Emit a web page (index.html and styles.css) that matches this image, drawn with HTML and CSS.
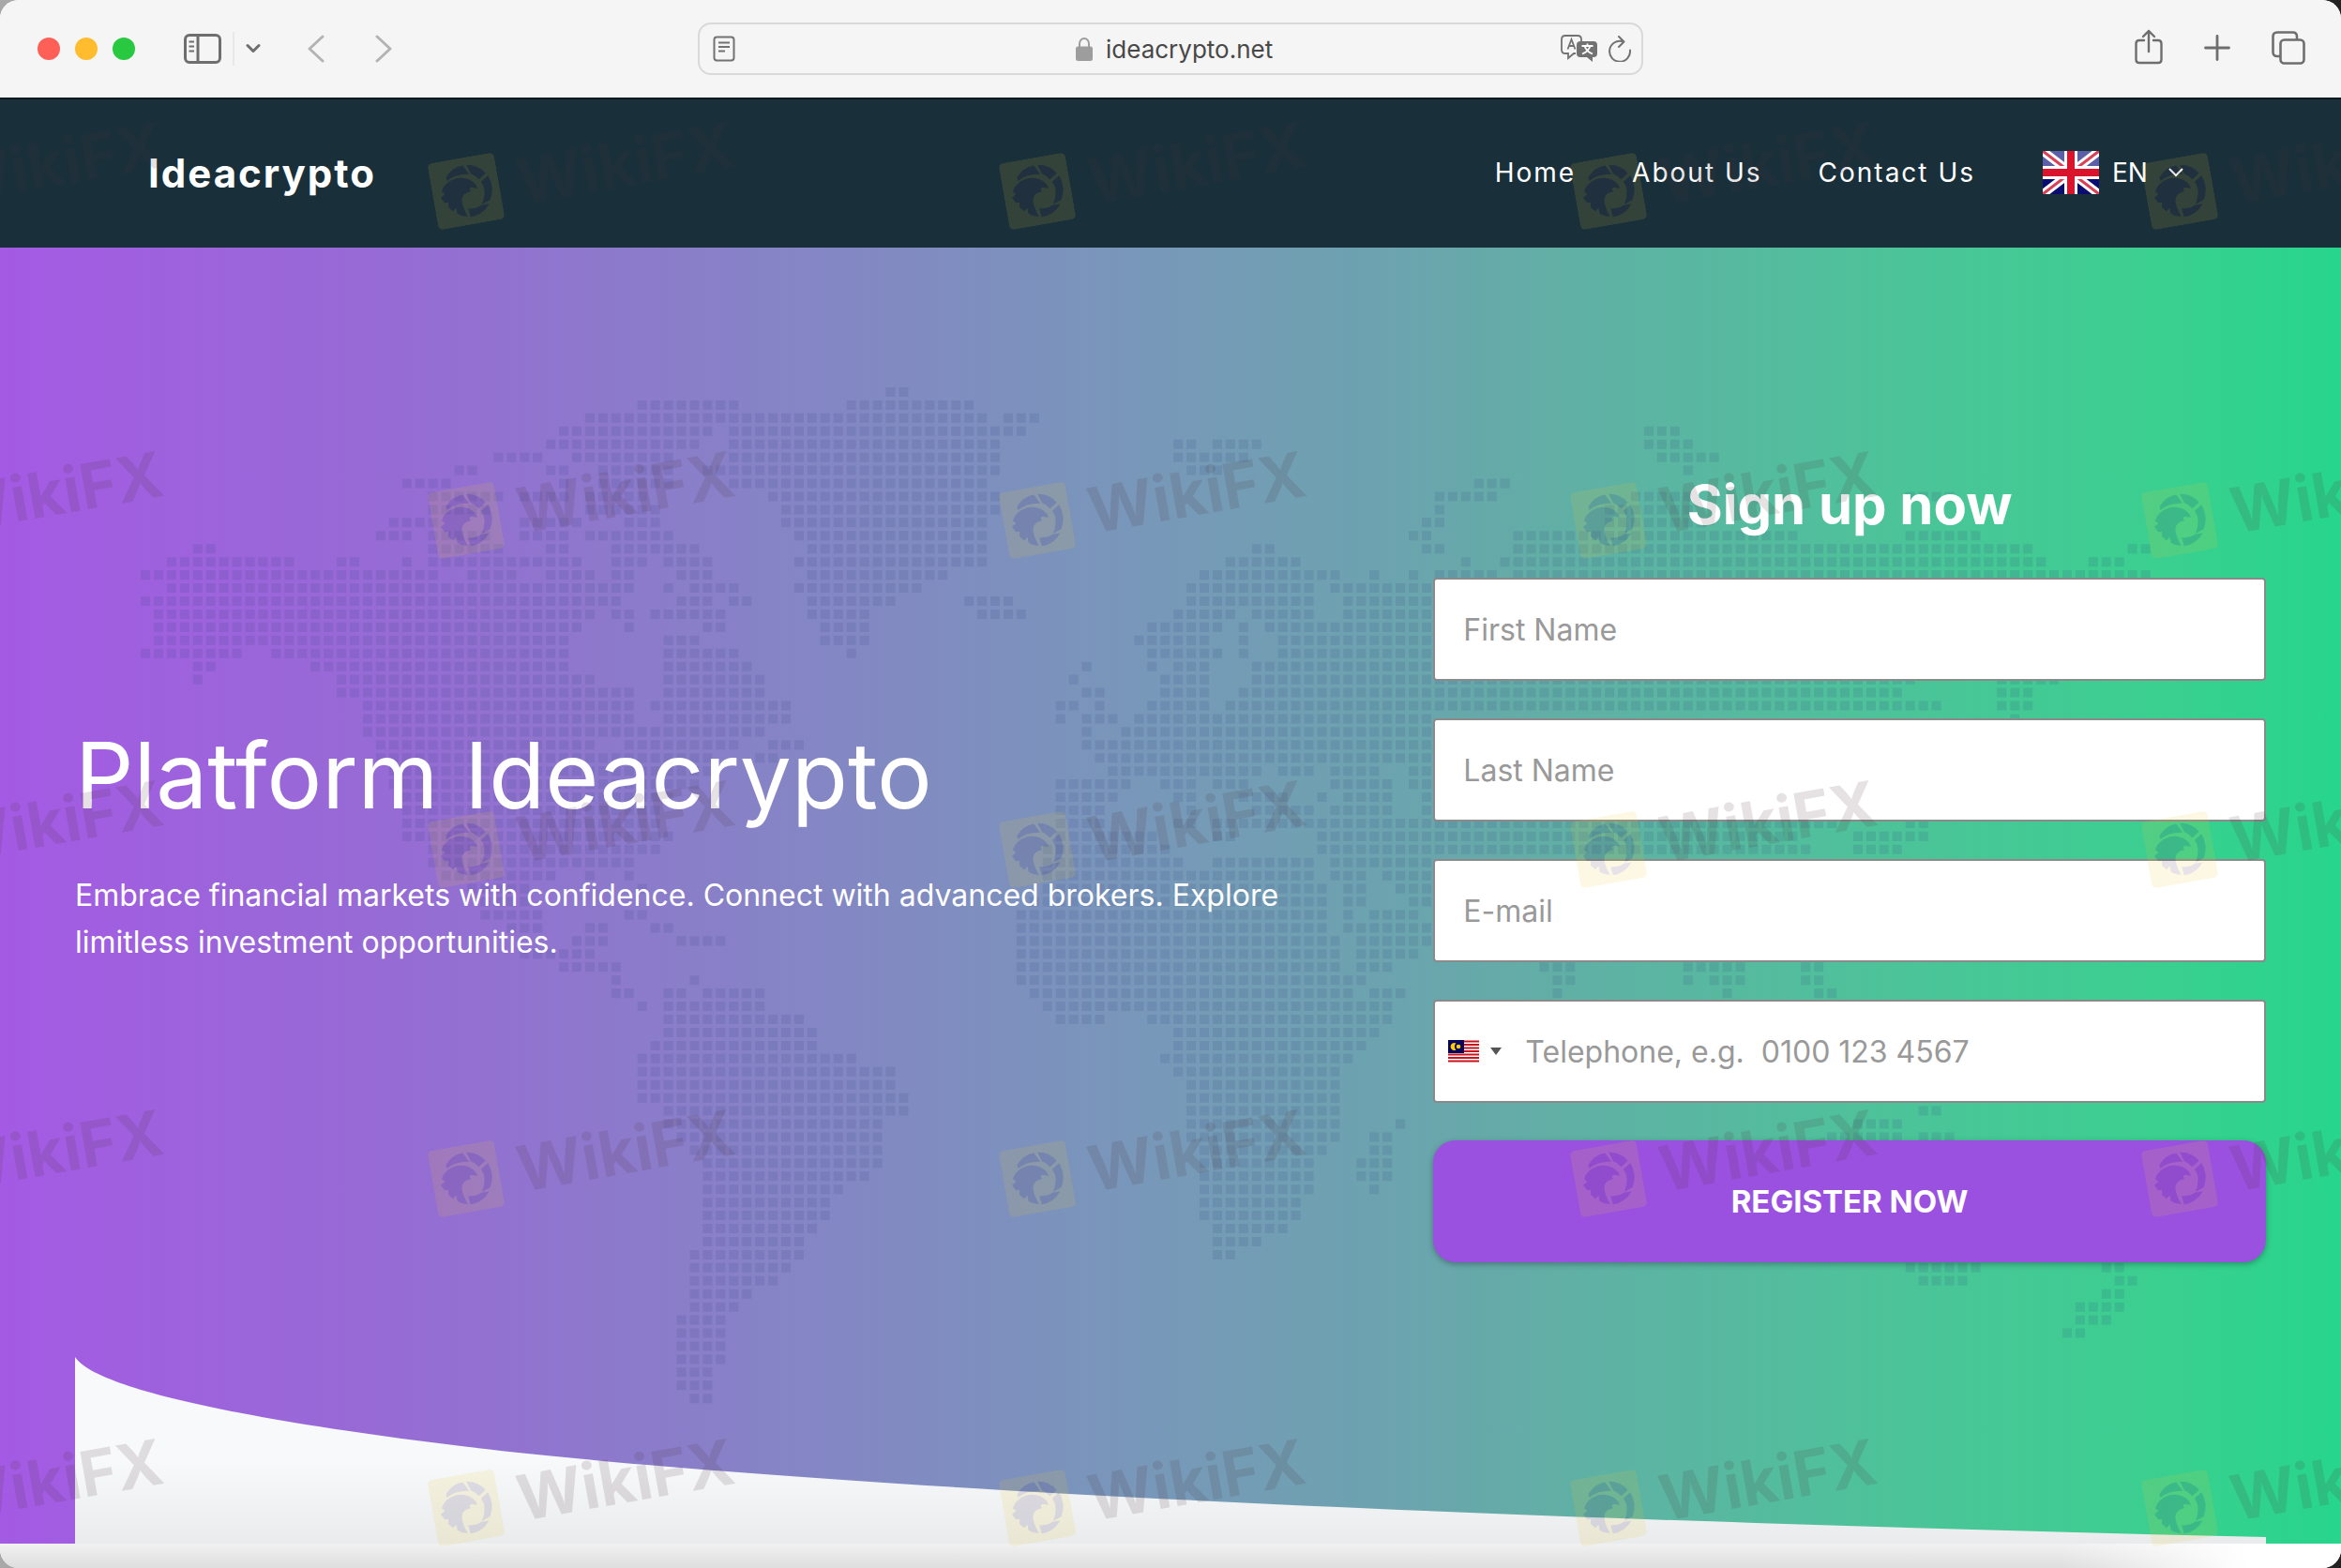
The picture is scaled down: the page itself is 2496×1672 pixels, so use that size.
FILE: index.html
```html
<!DOCTYPE html>
<html lang="en">
<head>
    <meta charset="UTF-8">
    <meta name="viewport" content="width=device-width, initial-scale=1.0">
    <title>Ideacrypto</title>
    <link rel="stylesheet" href="styles.css">
</head>
<body>

<div class="window">

    <!-- browser bar -->
    <div class="toolbar">
        <div class="tools-left">
            <span class="light red"></span>
            <span class="light yellow"></span>
            <span class="light green"></span>
            <button class="tool sidebar" aria-label="Sidebar">
                <svg width="40" height="32" viewBox="0 0 40 32" fill="none" stroke="#6e6e6e" stroke-width="3">
                    <rect x="1.5" y="1.5" width="37" height="29" rx="4.5"/>
                    <path d="M15 2v28"/>
                    <path d="M5.500 8.500h5.500M5.500 13.500h5.500M5.500 18.500h5.500" stroke-width="2"/>
                </svg>
            </button>
            <button class="tool group-menu" aria-label="Tab groups">
                <svg width="16" height="12" viewBox="0 0 16 12" fill="none" stroke="#6e6e6e" stroke-width="3" stroke-linecap="round" stroke-linejoin="round"><path d="M2 2.500l6 6 6-6"/></svg>
            </button>
            <button class="tool back" aria-label="Back">
                <svg width="18" height="30" viewBox="0 0 18 30" fill="none" stroke="#b3b3b3" stroke-width="3" stroke-linecap="round" stroke-linejoin="round"><path d="M16 2L2 15l14 13"/></svg>
            </button>
            <button class="tool forward" aria-label="Forward">
                <svg width="18" height="30" viewBox="0 0 18 30" fill="none" stroke="#b3b3b3" stroke-width="3" stroke-linecap="round" stroke-linejoin="round"><path d="M2 2l14 13L2 28"/></svg>
            </button>
        </div>

        <div class="address">
            <button class="tool" aria-label="Reader">
                <svg width="24" height="28" viewBox="0 0 24 28" fill="none" stroke="#727272" stroke-width="2">
                    <rect x="1.500" y="1.500" width="21" height="25" rx="3"/>
                    <path d="M6 7.500h12M6 12h12M6 16.500h7"/>
                </svg>
            </button>
            <div class="site">
                <svg width="18" height="26" viewBox="0 0 18 26"><path d="M4 11V7.500a5 5.500 0 0 1 10 0V11" fill="none" stroke="#9d9d9d" stroke-width="2"/><rect y="10.500" width="18" height="15.500" rx="2.500" fill="#9d9d9d"/></svg>
                <input type="text" value="ideacrypto.net" aria-label="Address">
            </div>
            <button class="tool" aria-label="Translate">
                <svg width="40" height="30" viewBox="0 0 40 30">
                    <path d="M16 20h-2l-6 5v-5H5q-4 0-4-4V5q0-4 4-4h13q4 0 4 4v2" fill="none" stroke="#727272" stroke-width="1.800"/>
                    <path d="M7.500 15.500L11.500 5l4 10.500M9 12h5" fill="none" stroke="#727272" stroke-width="1.800"/>
                    <path d="M21 7h14q4 0 4 4v9q0 4-4 4h-1v5l-6-5h-7q-4 0-4-4v-9q0-4 4-4z" fill="#727272"/>
                    <path d="M22.500 12h12M28.500 9.500V12M31.500 12q-2 6-8.500 8.500M25.500 12q2 6 8.500 8.500" fill="none" stroke="#fff" stroke-width="1.800"/>
                </svg>
            </button>
            <button class="tool" aria-label="Reload">
                <svg width="26" height="28" viewBox="0 0 26 28" fill="none" stroke="#727272" stroke-width="2" stroke-linecap="round" stroke-linejoin="round"><path d="M24 15.500A11 11 0 1 1 15.500 6M12 1l5.500 5.500L12 12"/></svg>
            </button>
        </div>

        <div class="tools-right">
            <button class="tool share" aria-label="Share">
                <svg width="30" height="38" viewBox="0 0 30 38" fill="none" stroke="#6e6e6e" stroke-width="2.400" stroke-linecap="round" stroke-linejoin="round"><path d="M10 12H5q-3.500 0-3.500 3.500v17Q1.500 36 5 36h20q3.500 0 3.500-3.500v-17Q28.500 12 25 12h-5M15 24V2M9 8l6-6 6 6"/></svg>
            </button>
            <button class="tool" aria-label="New tab">
                <svg width="28" height="28" viewBox="0 0 28 28" fill="none" stroke="#6e6e6e" stroke-width="2.800" stroke-linecap="round"><path d="M14 1.500v25M1.500 14h25"/></svg>
            </button>
            <button class="tool" aria-label="Tabs">
                <svg width="36" height="36" viewBox="0 0 36 36" fill="none" stroke="#6e6e6e" stroke-width="2.600"><rect x="9.500" y="9.500" width="25" height="25" rx="4"/><path d="M9.500 27H6q-4.500 0-4.500-4.500V6Q1.500 1.500 6 1.500h16.500Q27 1.500 27 6v3"/></svg>
            </button>
        </div>
    </div>

    <header class="navbar">
        <a class="brand" href="#">Ideacrypto</a>
        <nav>
            <a href="#">Home</a>
            <a href="#">About Us</a>
            <a href="#">Contact Us</a>
            <label class="language">
                <svg width="60" height="46" viewBox="0 0 60 46">
                    <rect width="60" height="46" fill="#0a0c70"/>
                    <rect width="60" height="18" fill="#5a5fa8"/>
                    <path d="M0 0l60 46M60 0L0 46" stroke="#fff" stroke-width="9"/>
                    <path d="M0 0l60 46M60 0L0 46" stroke="#d8415a" stroke-width="3"/>
                    <path d="M30 0v46M0 23h60" stroke="#fff" stroke-width="14"/>
                    <path d="M30 0v46M0 23h60" stroke="#d8152c" stroke-width="8"/>
                </svg>
                <select aria-label="Language">
                    <option>EN</option>
                </select>
                <svg class="caret" width="16" height="10" viewBox="0 0 16 10" fill="none" stroke="#fff" stroke-width="2"><path d="M1 1l7 7 7-7"/></svg>
            </label>
        </nav>
    </header>

    <main class="hero">
        <!-- dotted world map, one unit per cell, one run of cells per move -->
        <svg class="map" viewBox="0 0 154 79">
            <g transform="translate(0 .5)">
                <path class="cells" d="M57 0h2M38 1h8M54 1h10M34 2h31M66 2h3M32 3h12M45 3h23M31 4h12M45 4h21M27 5h4M33 5h8M45 5h21M24 6h2M31 6h2M35 6h6M43 6h23M20 7h4M32 7h1M35 7h6M45 7h20M22 8h6M29 8h4M34 8h5M48 8h18M22 9h5M34 9h6M49 9h17M19 10h4M29 10h5M37 10h3M49 10h16M18 11h3M22 11h5M29 11h4M34 11h7M50 11h15M4 12h2M22 12h6M31 12h2M36 12h7M51 12h14M2 13h10M15 13h2M20 13h1M22 13h12M36 13h3M40 13h4M50 13h15M0 14h23M25 14h4M31 14h4M36 14h2M41 14h3M51 14h11M2 15h36M40 15h1M42 15h4M50 15h10M0 16h37M41 16h3M45 16h2M51 16h7M63 16h4M1 17h34M36 17h2M39 17h6M51 17h5M64 17h4M1 18h33M37 18h1M43 18h2M52 18h4M1 19h32M40 19h3M52 19h4M0 20h8M10 20h23M40 20h6M54 20h1M4 21h2M13 21h20M40 21h7M4 22h1M15 22h20M40 22h8M15 23h23M40 23h8M17 24h21M39 24h11M17 25h21M40 25h10M17 26h31M18 27h17M37 27h9M48 27h3M18 28h26M47 28h2M19 29h25M19 30h24M20 31h21M20 32h20M20 33h20M20 34h21M22 35h18M22 36h16M23 37h9M34 37h1M37 37h1M25 38h5M38 38h1M26 39h4M26 40h5M37 40h2M28 41h3M34 41h2M39 41h2M33 42h3M41 42h4M29 43h6M32 44h5M36 45h1M42 45h1M36 46h2M40 46h2M43 46h5M38 47h1M40 47h8M40 48h11M40 49h12M39 50h13M38 51h17M38 52h20M38 53h20M38 54h21M40 55h19M40 56h17M41 57h16M42 58h15M43 59h14M43 60h13M43 61h11M43 62h10M43 63h10M43 64h9M43 65h8M42 66h9M42 67h8M42 68h7M42 69h5M42 70h4M41 71h4M41 72h4M41 73h4M41 74h4M41 75h3M41 76h3M42 77h2"/>
                <path class="cells" d="M79 4h2M82 4h4M79 5h6M80 6h3M115 3h3M115 4h4M116 5h5M118 6h1M102 7h3M99 8h5M114 8h5M135 8h4M99 9h1M112 9h7M98 10h2M112 10h8M97 11h2M105 11h22M135 11h6M85 12h2M98 12h2M105 12h40M152 12h2M83 13h6M101 13h1M104 13h42M149 13h3M81 14h11M94 14h1M97 14h1M99 14h5M105 14h49M80 15h10M91 15h8M80 16h10M92 16h7M79 17h5M85 17h5M92 17h7M77 18h6M84 18h1M86 18h13M76 19h6M84 19h1M87 19h12M77 20h6M84 20h1M87 20h12M72 21h1M77 21h1M79 21h3M85 21h14M71 22h1M78 22h4M85 22h51M142 22h5M72 23h2M78 23h4M84 23h51M142 23h3M70 24h2M73 24h1M77 24h5M83 24h55M142 24h3M70 25h1M72 25h3M76 25h23M143 25h1M72 26h1M75 26h24M72 27h1M73 27h26M73 28h26M74 29h12M87 29h3M91 29h4M97 29h2M70 30h6M78 30h3M82 30h3M91 30h5M97 30h2M70 31h5M79 31h2M84 31h4M90 31h1M92 31h4M98 31h1M70 32h4M80 32h1M85 32h5M91 32h5M98 32h1M70 33h4M79 33h2M82 33h2M84 33h46M135 33h2M70 34h8M82 34h2M90 34h37M131 34h6M69 35h10M90 35h38M131 35h4M69 36h11M82 36h8M91 36h8M69 37h21M91 37h3M95 37h4M69 38h22M92 38h2M96 38h3M68 39h23M92 39h2M97 39h2M67 40h24M92 40h1M94 40h4M67 41h24M92 41h7M67 42h25M93 42h6M67 43h25M93 43h5M67 44h25M93 44h3M107 44h3M118 44h5M127 44h2M67 45h27M108 45h2M118 45h1M120 45h3M127 45h2M68 46h25M94 46h3M108 46h1M121 46h1M128 46h2M69 47h27M70 48h4M77 48h19M79 49h16M79 50h15M78 51h15M79 52h13M80 53h12M80 54h12M80 55h12M136 55h2M80 56h12M96 56h1M131 56h4M80 57h12M94 57h2M129 57h6M136 57h3M81 58h10M94 58h2M81 59h9M93 59h3M81 60h9M93 60h3M81 61h9M94 61h1M81 62h8M81 63h8M82 64h6M82 65h4M82 66h2M135 67h6M150 67h2M136 68h4M151 68h2M150 69h2M148 70h4M148 71h3M147 72h2"/>
            </g>
        </svg>

        <div class="container">
            <div class="intro">
                <h1>Platform Ideacrypto</h1>
                <p>Embrace financial markets with confidence. Connect with advanced brokers. Explore limitless investment opportunities.</p>
            </div>

            <form class="signup">
                <h2>Sign up now</h2>
                <input type="text" name="first" placeholder="First Name" aria-label="First Name">
                <input type="text" name="last" placeholder="Last Name" aria-label="Last Name">
                <input type="email" name="email" placeholder="E-mail" aria-label="E-mail">
                <div class="phone">
                    <button type="button" class="country" aria-label="Country code">
                        <svg width="33" height="24" viewBox="0 0 33 24">
                            <rect width="33" height="24" rx="1" fill="#fff"/>
                            <path d="M0 1.500h33M0 5h33M0 8.500h33M0 12h33M0 15.500h33M0 19h33M0 22.500h33" stroke="#c8141e" stroke-width="1.800"/>
                            <rect width="17" height="14" fill="#06065f"/>
                            <path d="M8.500 3.500a4 4 0 1 0 0 7 4.500 4.500 0 0 1 0-7z" fill="#fc0"/>
                            <circle cx="11" cy="7" r="2.300" fill="#fc0"/>
                        </svg>
                        <svg width="12" height="8" viewBox="0 0 12 8"><path d="M0 0h12L6 8z" fill="#555"/></svg>
                    </button>
                    <input type="tel" name="phone" placeholder="Telephone, e.g.  0100 123 4567" aria-label="Telephone">
                </div>
                <button type="submit" class="register">REGISTER NOW</button>
            </form>
        </div>

        <svg class="wave" viewBox="0 0 2336 199" preserveAspectRatio="none">
            <defs>
                <linearGradient id="fade" x2="0" y2="1">
                    <stop offset=".55" stop-color="#f7f9fb"/>
                    <stop offset="1" stop-color="#e9ebed"/>
                </linearGradient>
            </defs>
            <path d="M0 0C25 38 220 72 420 96C770 137 1420 171 2336 192V199H0z" fill="url(#fade)"/>
        </svg>
    </main>

    <div class="bottom-strip"></div>

    <!-- watermark layer -->
    <svg class="symbols" width="0" height="0">
        <symbol id="eagle" viewBox="0 0 70 70">
            <!-- rounded plate with the ring and the head cut out of it -->
            <path fill="#f0c832" fill-opacity=".13" fill-rule="evenodd" d="M6 0h58q6 0 6 6v58q0 6-6 6H6q-6 0-6-6V6q0-6 6-6zM17 17Q25 8 36 8L41 18Q27 15 17 21zM40 8Q52 10 58 20L50 25Q47 20 43 18zM60 23Q65 36 58 48L49 51Q57 38 52 28zM56 52Q48 62 35 62L34 53Q43 55 48 52zM10 31Q14 22 27 20Q40 20 46 30L47 34L41 32Q37 33 40 36Q31 36 29 43Q28 50 32 61Q26 60 22 56L22 50L18 53L14 48L15 43L11 43L8 37L13 34z"/>
            <g fill="#50325a" fill-opacity=".14">
                <path d="M17 17Q25 8 36 8L41 18Q27 15 17 21z"/>
                <path d="M40 8Q52 10 58 20L50 25Q47 20 43 18z"/>
                <path d="M60 23Q65 36 58 48L49 51Q57 38 52 28z"/>
                <path d="M56 52Q48 62 35 62L34 53Q43 55 48 52z"/>
                <path d="M10 31Q14 22 27 20Q40 20 46 30L47 34L41 32Q37 33 40 36Q31 36 29 43Q28 50 32 61Q26 60 22 56L22 50L18 53L14 48L15 43L11 43L8 37L13 34z"/>
            </g>
        </symbol>
    </svg>
    <div class="watermark" aria-hidden="true">
        <div class="marks">
            <div class="mark"><svg><use href="#eagle"/></svg>WikiFX</div>
            <div class="mark"><svg><use href="#eagle"/></svg>WikiFX</div>
            <div class="mark"><svg><use href="#eagle"/></svg>WikiFX</div>
            <div class="mark"><svg><use href="#eagle"/></svg>WikiFX</div>
            <div class="mark"><svg><use href="#eagle"/></svg>WikiFX</div>
            <div class="mark"><svg><use href="#eagle"/></svg>WikiFX</div>
            <div class="mark"><svg><use href="#eagle"/></svg>WikiFX</div>
            <div class="mark"><svg><use href="#eagle"/></svg>WikiFX</div>
            <div class="mark"><svg><use href="#eagle"/></svg>WikiFX</div>
            <div class="mark"><svg><use href="#eagle"/></svg>WikiFX</div>
            <div class="mark"><svg><use href="#eagle"/></svg>WikiFX</div>
            <div class="mark"><svg><use href="#eagle"/></svg>WikiFX</div>
            <div class="mark"><svg><use href="#eagle"/></svg>WikiFX</div>
            <div class="mark"><svg><use href="#eagle"/></svg>WikiFX</div>
            <div class="mark"><svg><use href="#eagle"/></svg>WikiFX</div>
            <div class="mark"><svg><use href="#eagle"/></svg>WikiFX</div>
            <div class="mark"><svg><use href="#eagle"/></svg>WikiFX</div>
            <div class="mark"><svg><use href="#eagle"/></svg>WikiFX</div>
            <div class="mark"><svg><use href="#eagle"/></svg>WikiFX</div>
            <div class="mark"><svg><use href="#eagle"/></svg>WikiFX</div>
            <div class="mark"><svg><use href="#eagle"/></svg>WikiFX</div>
            <div class="mark"><svg><use href="#eagle"/></svg>WikiFX</div>
            <div class="mark"><svg><use href="#eagle"/></svg>WikiFX</div>
            <div class="mark"><svg><use href="#eagle"/></svg>WikiFX</div>
            <div class="mark"><svg><use href="#eagle"/></svg>WikiFX</div>
        </div>
    </div>

</div>

</body>
</html>
```
FILE: styles.css
```css
* {
    box-sizing: border-box;
}
body {
    margin: 0;
    font-family: Inter, "Liberation Sans", sans-serif;
    font-size: 32px;
    color: white;
    background: linear-gradient(90deg, #a8a8a8, #b9b2a8 50%, #222);
}
button, input, select {
    font: inherit;
    margin: 0;
}
a {
    color: white;
    text-decoration: none;
}
svg {
    display: block;
    flex-shrink: 0;
}
.window {
    position: relative;
    display: flex;
    flex-direction: column;
    min-height: 100vh;
    border-radius: 20px;
    overflow: hidden;
    background-color: white;
}

/* browser bar */
.toolbar {
    display: grid;
    grid-template-columns: 1fr 1008px 1fr;
    align-items: center;
    height: 104px;
    padding: 0 38px;
    background-color: #f5f5f5;
}
.tools-left,
.tools-right {
    display: flex;
    align-items: center;
}
.tools-right {
    justify-content: flex-end;
    gap: 44px;
    padding-bottom: 2px;
}
.tool {
    padding: 0;
    border: none;
    background: none;
}
.share {
    padding-bottom: 2px;
}
.light {
    width: 24px;
    height: 24px;
    margin: 0 16px 0 0;
    border-radius: 50%;
}
.light:first-child {
    margin-left: 2px;
}
.red {
    background-color: #fe5f57;
}
.yellow {
    background-color: #febc2e;
}
.green {
    background-color: #28c840;
}
.sidebar {
    margin-left: 36px;
}
.group-menu {
    display: flex;
    align-items: center;
    height: 36px;
    margin-left: 12px;
    padding-left: 12px;
    border-left: 2px solid #e8e8e8;
}
.back {
    margin-left: 50px;
}
.forward {
    margin-left: 54px;
}
.address {
    display: flex;
    align-items: center;
    gap: 10px;
    height: 56px;
    padding: 0 10px 0 14px;
    border: 2px solid #d9d9d9;
    border-radius: 14px;
}
.site {
    flex: 1;
    display: flex;
    align-items: center;
    justify-content: center;
    gap: 14px;
    padding-left: 58px;
}
.site input {
    width: 180px;
    padding: 0;
    border: none;
    background: none;
    color: #484848;
    font-size: 26px;
}

/* site header */
.navbar {
    display: flex;
    align-items: center;
    justify-content: space-between;
    height: 160px;
    padding: 0 168px 2px 158px;
    border-top: 2px solid #06191f;
    background-color: #19303b;
}
.brand {
    font-size: 42px;
    font-weight: 700;
    letter-spacing: 2px;
}
nav {
    display: flex;
    align-items: center;
    gap: 60px;
    font-size: 28px;
}
nav a {
    letter-spacing: 2px;
}
.language {
    display: flex;
    align-items: center;
    margin-left: 12px;
}
.language select {
    width: 60px;
    margin: 0 0 0 14px;
    padding: 0;
    border: none;
    appearance: none;
    background: none;
    color: white;
}

/* hero */
.hero {
    position: relative;
    flex: 1;
    padding: 236px 80px 290px;
    background: linear-gradient(90deg, #a45ae4, #956dd3 18%, #8585c5 34%, #7799b8 50%, #6ba4ae 60%, #62aea6 66%, #4ec29a 80%, #3bcf90 92%, #27d58c);
}
.map {
    position: absolute;
    top: 147px;
    left: 6%;
    width: 86%;
}
.cells {
    fill: none;
    stroke: #283c78;
    stroke-opacity: .12;
    stroke-width: .72;
    stroke-dasharray: .72 .28;
}
.container {
    position: relative;
    display: grid;
    grid-template-columns: 62% 38%;
    align-items: center;
}
.intro {
    padding: 0 80px 54px 0;
}
h1 {
    margin: 0 0 38px;
    font-size: 98px;
    font-weight: 400;
    line-height: 130px;
}
.intro p {
    margin: 0;
    line-height: 50px;
}
.signup {
    display: flex;
    flex-direction: column;
    gap: 40px;
}
h2 {
    margin: 0;
    font-size: 58px;
    font-weight: 700;
    line-height: 76px;
    text-align: center;
}
.signup input {
    width: 100%;
    height: 110px;
    padding: 0 30px;
    border: 2px solid #8a8a8a;
    border-radius: 4px;
    background-color: white;
    color: #333;
}
.signup input::placeholder {
    color: #999;
}
.phone {
    position: relative;
    display: flex;
}
.signup .phone input {
    padding-left: 96px;
}
.country {
    position: absolute;
    top: 2px;
    bottom: 2px;
    left: 16px;
    display: flex;
    align-items: center;
    gap: 12px;
    padding: 0;
    border: none;
    background: none;
}
.register {
    height: 130px;
    border: none;
    border-radius: 24px;
    background-color: #9b51e0;
    box-shadow: 0 2px 6px rgba(0, 0, 0, 0.3);
    color: white;
    font-size: 33px;
    font-weight: 700;
}
.wave {
    position: absolute;
    left: 80px;
    bottom: 0;
    width: calc(100% - 160px);
    height: 199px;
}
.bottom-strip {
    height: 26px;
    background: linear-gradient(90deg, transparent 88%, white 96%), linear-gradient(#f1f1f1, #dedede);
}

/* watermark */
.symbols {
    position: absolute;
}
.watermark {
    position: absolute;
    inset: 0;
    overflow: hidden;
    pointer-events: none;
}
.marks {
    display: grid;
    grid-template-columns: repeat(5, 609px);
    grid-auto-rows: 351px;
    margin: 6px 0 0 -292px;
}
.mark {
    display: flex;
    align-items: center;
    justify-content: center;
    gap: 20px;
    transform: rotate(-10deg);
    color: rgba(80, 50, 60, 0.14);
    font-size: 67px;
    font-weight: 700;
}
.mark svg {
    width: 72px;
    height: 72px;
}
```
